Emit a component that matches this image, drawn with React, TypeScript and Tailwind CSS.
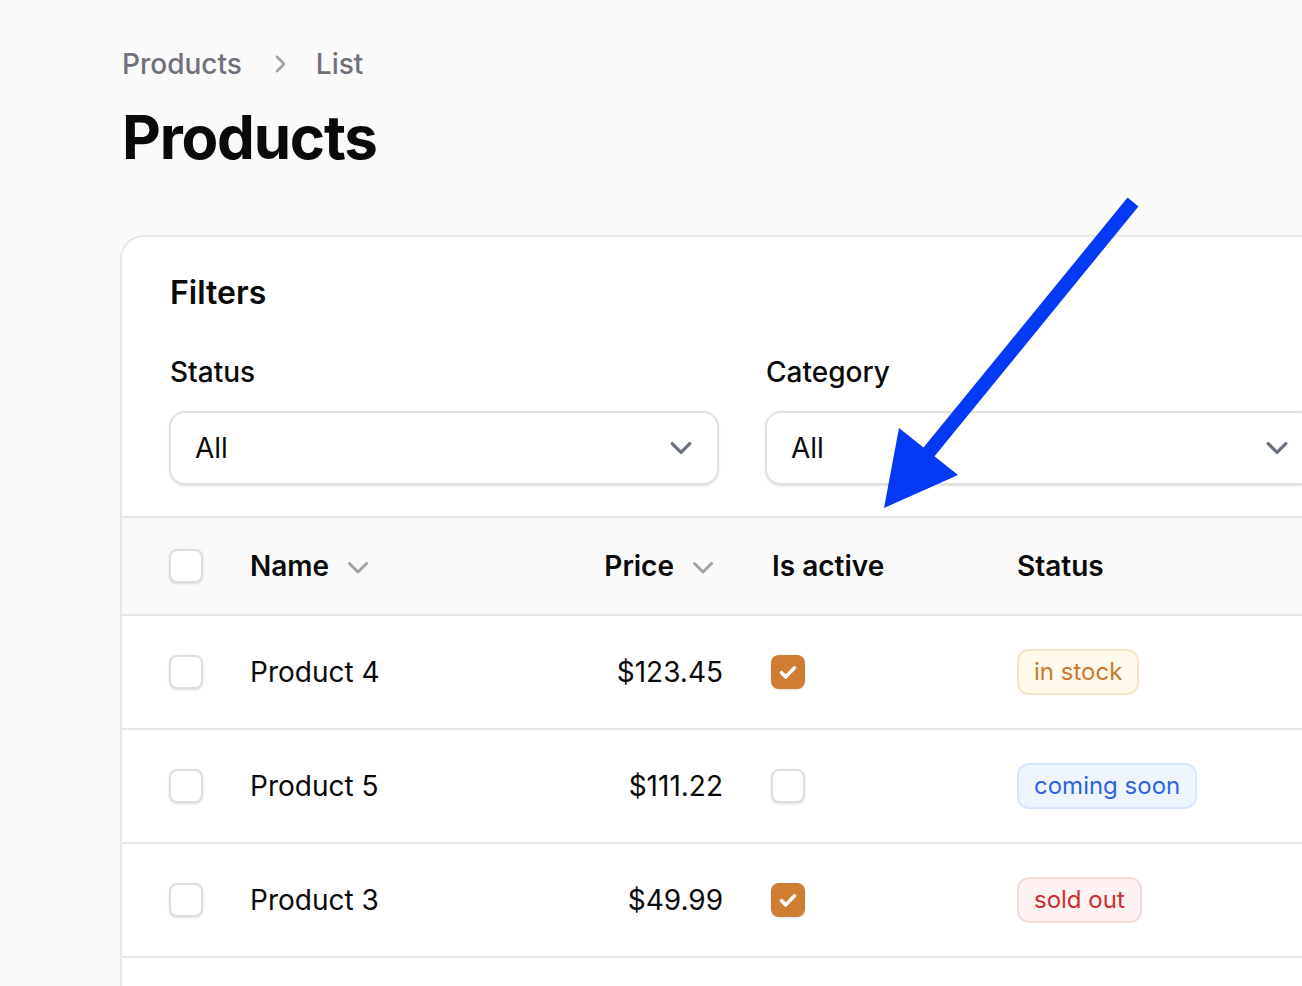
import React from 'react';

type Row = {
  name: string;
  price: string;
  active: boolean;
  status: 'in stock' | 'coming soon' | 'sold out';
};

const rows: Row[] = [
  { name: 'Product 4', price: '$123.45', active: true, status: 'in stock' },
  { name: 'Product 5', price: '$111.22', active: false, status: 'coming soon' },
  { name: 'Product 3', price: '$49.99', active: true, status: 'sold out' },
];

function SortChevron() {
  return (
    <svg viewBox="0 0 20 20" className="w-10 h-10 text-[#a1a1aa]" fill="currentColor">
      <path
        fillRule="evenodd"
        d="M5.22 8.22a.75.75 0 0 1 1.06 0L10 11.94l3.72-3.72a.75.75 0 1 1 1.06 1.06l-4.25 4.25a.75.75 0 0 1-1.06 0L5.22 9.28a.75.75 0 0 1 0-1.06Z"
        clipRule="evenodd"
      />
    </svg>
  );
}

function Checkbox({ checked = false }: { checked?: boolean }) {
  if (checked) {
    return (
      <span className="w-[34px] h-[34px] rounded-[8px] bg-[#ce7d32] flex items-center justify-center shadow-sm">
        <svg viewBox="0 0 16 16" className="w-[26px] h-[26px]" fill="none">
          <path d="M4 8.4l2.6 2.6L12 5.4" stroke="white" strokeWidth="2.2" strokeLinecap="round" strokeLinejoin="round" />
        </svg>
      </span>
    );
  }
  return <span className="w-[34px] h-[34px] rounded-[8px] bg-white border-2 border-[#dedede] shadow-sm block" />;
}

function Select() {
  return (
    <div className="h-[74px] rounded-[16px] border-2 border-[#e2e2e2] bg-white shadow-sm flex items-center justify-between pl-[24px] pr-[14px]">
      <span className="text-[28px] text-[#0a0a0a]">All</span>
      <svg viewBox="0 0 20 20" className="w-[44px] h-[44px]" fill="none">
        <path d="M6 8l4 4 4-4" stroke="#6b7280" strokeWidth="1.5" strokeLinecap="round" strokeLinejoin="round" />
      </svg>
    </div>
  );
}

function Badge({ status }: { status: Row['status'] }) {
  const cls =
    status === 'in stock'
      ? 'bg-[#fffaeb] border-[#f6e5c9] text-[#c9792e]'
      : status === 'coming soon'
        ? 'bg-[#eef5ff] border-[#d7e5fd] text-[#2f63e3]'
        : 'bg-[#fdf1f1] border-[#f6dada] text-[#c9302f]';
  return (
    <span className={`inline-flex items-center h-[46px] px-[15px] rounded-[12px] border-2 text-[24px] ${cls}`}>
      {status}
    </span>
  );
}

export default function App() {
  return (
    <div className="relative w-full h-[986px] overflow-hidden bg-[#fafafa] font-[Inter,'Liberation_Sans',sans-serif] text-[#0a0a0a]">
      <div className="pl-[120px] pt-[44px]">
        {/* breadcrumbs */}
        <nav className="flex items-center gap-[20px] text-[28px] leading-[40px] font-medium text-[#71717a] pl-[2px]">
          <span>Products</span>
          <svg viewBox="0 0 20 20" className="w-[34px] h-[34px] text-[#a1a1aa]" fill="currentColor">
            <path
              fillRule="evenodd"
              d="M8.22 5.22a.75.75 0 0 1 1.06 0l4.25 4.25a.75.75 0 0 1 0 1.06l-4.25 4.25a.75.75 0 0 1-1.06-1.06L11.94 10 8.22 6.28a.75.75 0 0 1 0-1.06Z"
              clipRule="evenodd"
            />
          </svg>
          <span>List</span>
        </nav>

        <h1 className="mt-[17px] pl-[2px] text-[60px] leading-[72px] font-bold tracking-[-0.02em]">Products</h1>

        {/* card */}
        <div className="mt-[62px] w-[1400px] bg-white border-2 border-[#e8e8e8] rounded-[24px] overflow-hidden">
          <div className="px-[47px] pt-[32px] pb-[31px]">
            <h2 className="text-[32px] leading-[48px] font-semibold pl-[1px]">Filters</h2>
            <div className="mt-[35px] grid grid-cols-[550px_550px] gap-x-[46px]">
              <div>
                <div className="text-[28px] leading-[40px] font-medium pl-[1px] mb-[19px]">Status</div>
                <Select />
              </div>
              <div>
                <div className="text-[28px] leading-[40px] font-medium pl-[1px] mb-[19px]">Category</div>
                <Select />
              </div>
            </div>
          </div>

          {/* table */}
          <div className="border-t-2 border-[#e6e6e6]">
            <div className="grid grid-cols-[128px_330px_143px_294px_1fr] items-center h-[98px] bg-[#fafafa] border-b-2 border-[#e6e6e6] text-[28px] font-semibold">
              <div className="pl-[47px]"><Checkbox /></div>
              <div className="flex items-center gap-[9px]">
                <span>Name</span>
                <SortChevron />
              </div>
              <div className="flex items-center justify-end gap-[9px]">
                <span>Price</span>
                <SortChevron />
              </div>
              <div className="pl-[49px]">Is active</div>
              <div>Status</div>
            </div>
            {rows.map((r) => (
              <div
                key={r.name}
                className="grid grid-cols-[128px_330px_143px_294px_1fr] items-center h-[114px] border-b-2 border-[#e6e6e6] text-[28px]"
              >
                <div className="pl-[47px]"><Checkbox /></div>
                <div>{r.name}</div>
                <div className="text-right">{r.price}</div>
                <div className="pl-[48px]"><Checkbox checked={r.active} /></div>
                <div><Badge status={r.status} /></div>
              </div>
            ))}
            <div className="h-[60px]" />
          </div>
        </div>
      </div>

      {/* annotation arrow */}
      <svg className="absolute inset-0 w-full h-full pointer-events-none" viewBox="0 0 1302 986">
        <line x1="1133" y1="202" x2="924" y2="458" stroke="#053af5" strokeWidth="14" />
        <polygon points="884,508 899,428 958,475" fill="#053af5" />
      </svg>
    </div>
  );
}
